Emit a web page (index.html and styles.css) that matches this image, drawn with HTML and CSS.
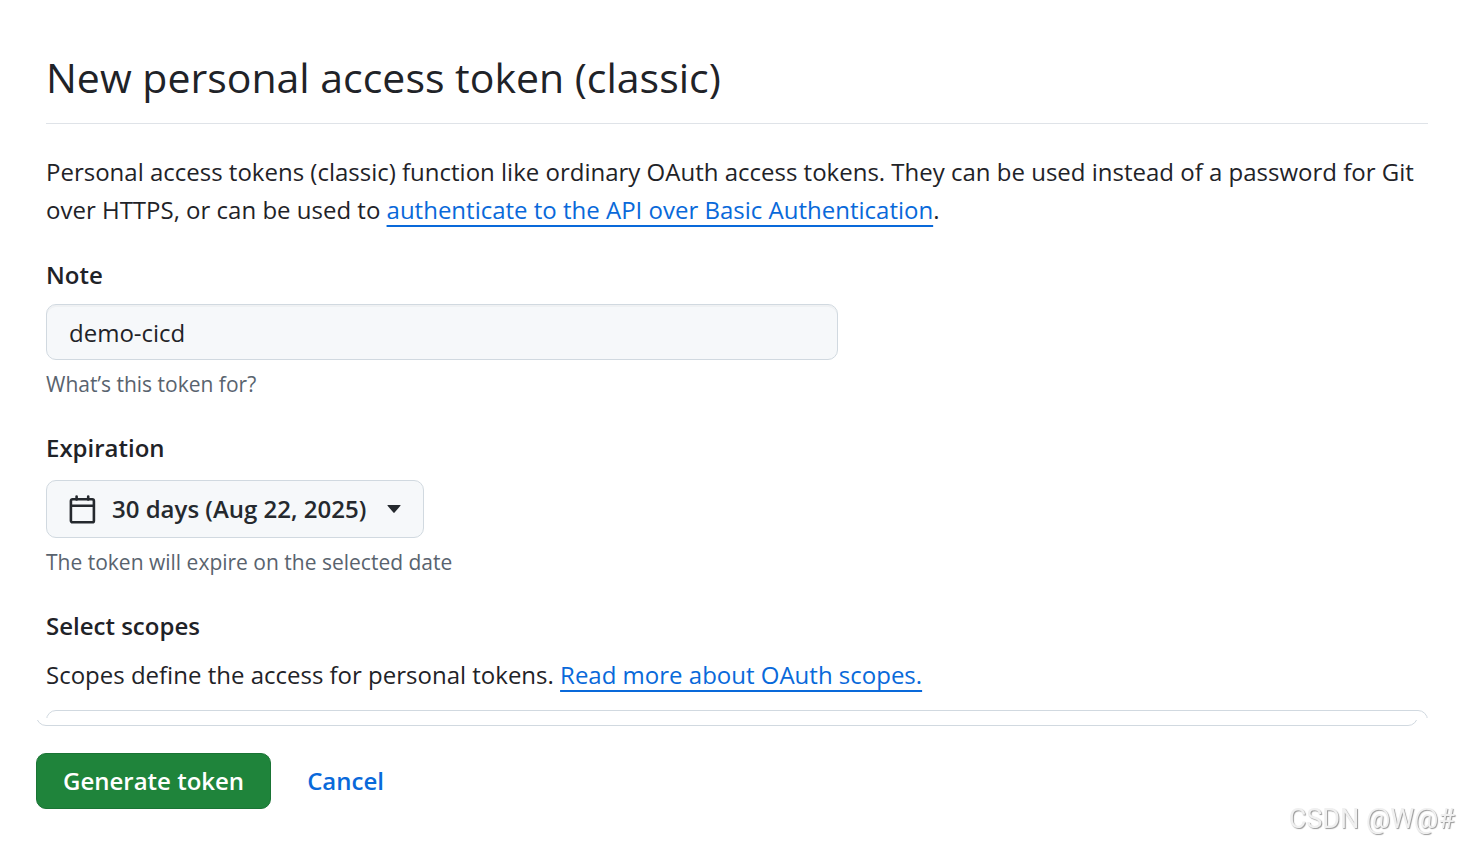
FILE: index.html
```
<!DOCTYPE html>
<html lang="en">
<head>
  <meta charset="UTF-8">
  <meta name="viewport" content="width=device-width, initial-scale=1">
  <title>New personal access token (classic)</title>
  <link rel="stylesheet" href="styles.css">
</head>
<body>

  <main class="settings">
    <h1 class="page-title">New personal access token (classic)</h1>

    <p class="intro">Personal access tokens (classic) function like ordinary OAuth access tokens. They can be used instead of a password for Git over HTTPS, or can be used to <a href="#">authenticate to the API over Basic Authentication</a>.</p>

    <form>
      <div class="form-group">
        <label class="form-label" for="note">Note</label>
        <input class="text-input" id="note" type="text" value="demo-cicd">
        <p class="hint">What’s this token for?</p>
      </div>

      <div class="form-group expiration">
        <label class="form-label" for="expiration">Expiration</label>
        <button class="btn" id="expiration" type="button">
          <svg class="icon-calendar" width="28" height="29" viewBox="0 0 28 29" fill="none" stroke="currentColor" stroke-width="2.6" stroke-linecap="round" aria-hidden="true">
            <rect x="1.9" y="4.3" width="23" height="23" rx="1.6"/>
            <path d="M2.5 10.8h22M7.6 1.5v3M19.2 1.5v3"/>
          </svg>
          <span>30 days (Aug 22, 2025)</span>
          <svg class="icon-caret" width="14" height="8" viewBox="0 0 14 8" fill="currentColor" aria-hidden="true">
            <path d="M1 0h12q1 0 .4.8L7.6 7.6Q7 8.2 6.4 7.6L.6.8Q0 0 1 0Z"/>
          </svg>
        </button>
        <p class="hint">The token will expire on the selected date</p>
      </div>

      <section class="scopes">
        <h2 class="form-label">Select scopes</h2>
        <p class="scopes-text">Scopes define the access for personal tokens. <a href="#">Read more about OAuth scopes.</a></p>
        <div class="list-top"></div>
        <div class="list-bottom"></div>
      </section>

      <div class="actions">
        <button class="btn btn-primary" type="submit">Generate token</button>
        <a class="cancel" href="#">Cancel</a>
      </div>
    </form>
  </main>

  <div class="watermark">CSDN @W@#</div>

</body>
</html>
```

FILE: styles.css
```
* {
  box-sizing: border-box;
}

body {
  margin: 0;
  font-family: "Segoe UI", "Open Sans", sans-serif;
  font-size: 24px;
  line-height: 38px;
  color: #1f2328;
  background-color: #fff;
}

h1, h2, p {
  margin: 0;
}

a {
  color: #0969da;
  text-decoration: underline;
  text-decoration-thickness: 2px;
  text-underline-offset: 6px;
}

.settings {
  padding: 45px 31px 36px 46px;
}

.page-title {
  padding-bottom: 14px;
  border-bottom: 1px solid #dfe3e8;
  font-size: 41px;
  font-weight: 400;
  line-height: 64px;
}

.intro {
  margin: 29px 0 27px;
}

.form-group {
  margin-bottom: 29px;
}

.form-label {
  display: block;
  margin-bottom: 10px;
  font-size: 24px;
  font-weight: 600;
  line-height: 38px;
}

.expiration .form-label {
  margin-bottom: 13px;
}

.text-input {
  display: block;
  width: 100%;
  max-width: 792px;
  height: 56px;
  padding: 0 22px;
  border: 1px solid #d1d9e0;
  border-radius: 10px;
  background-color: #f6f8fa;
  box-shadow: inset 0 2px 0 rgba(31, 35, 40, 0.03);
  color: inherit;
  font: inherit;
}

.hint {
  margin-top: 8px;
  color: #59636e;
  font-size: 21px;
  line-height: 32px;
}

.btn {
  display: inline-flex;
  align-items: center;
  gap: 15px;
  height: 58px;
  padding: 0 22px;
  border: 1px solid #d1d9e0;
  border-radius: 10px;
  background-color: #f6f8fa;
  color: #25292e;
  font: inherit;
  font-weight: 600;
  cursor: pointer;
}

.icon-caret {
  margin-left: 6px;
}

.scopes-text {
  margin: 11px 0 16px;
}

/* rounded ends of the scrolled scope list */
.list-top,
.list-bottom {
  display: flex;
  height: 8px;
  overflow: hidden;
}

.list-top::before,
.list-bottom::before {
  content: "";
  flex: 1 0 auto;
  height: 24px;
  border: 1px solid #d1d9e0;
  border-radius: 10px;
}

.list-bottom {
  align-items: flex-end;
  height: 6px;
  margin: 2px 10px 0 -10px;
}

.actions {
  display: flex;
  align-items: center;
  gap: 36px;
  margin: 27px 0 0 -10px;
}

.btn-primary {
  height: 56px;
  padding: 0 26px;
  border-color: #1a7435;
  background-color: #1f843b;
  color: #fff;
}

.cancel {
  font-weight: 600;
  text-decoration: none;
}

.watermark {
  position: fixed;
  right: 4px;
  bottom: 8px;
  color: #f0f0f0;
  font-family: Roboto, Arial, sans-serif;
  font-size: 27px;
  font-weight: 400;
  line-height: 36px;
  text-shadow: 1px 1px 1px #999;
}
```
